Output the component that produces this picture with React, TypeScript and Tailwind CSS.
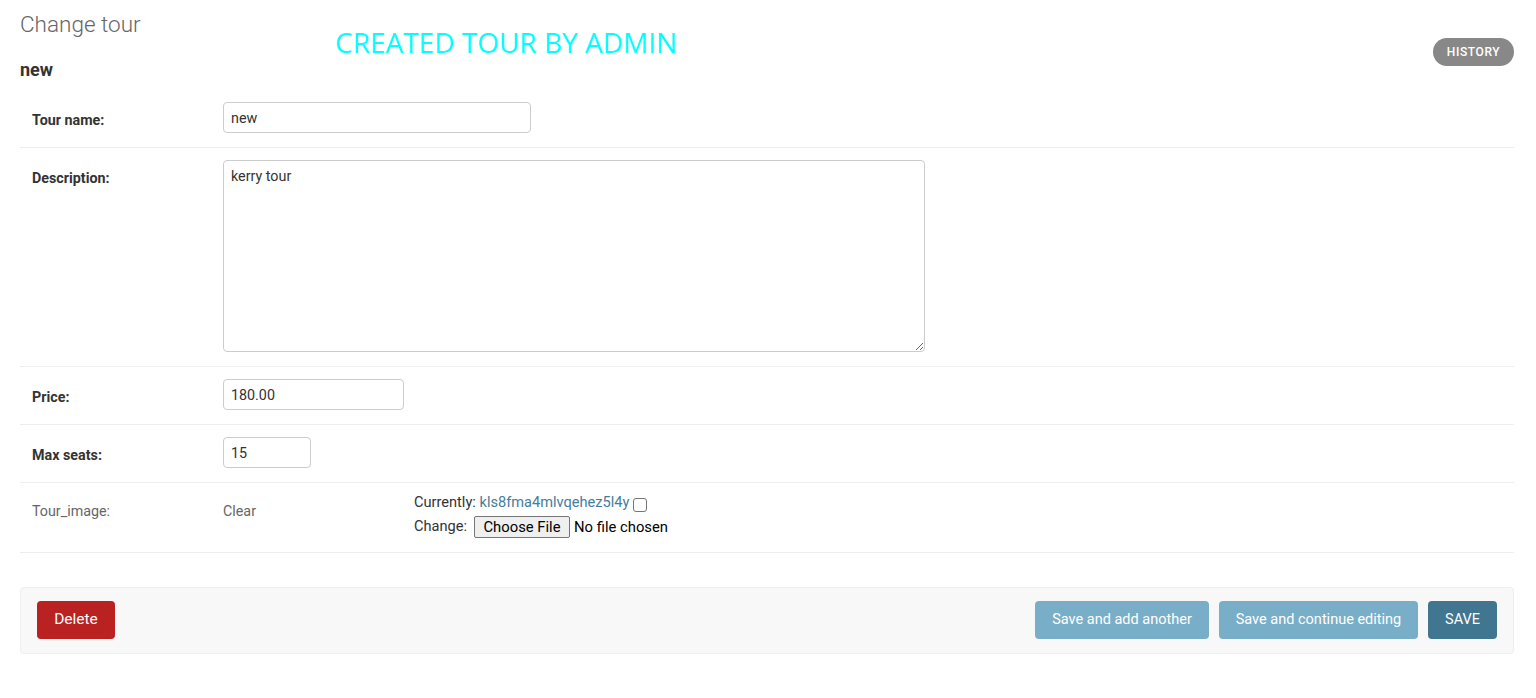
import React from "react";

const roboto = { fontFamily: "Roboto, 'Liberation Sans', sans-serif" };

function Row({ label, children }: { label: string; children: React.ReactNode }) {
  return (
    <div className="flex items-start border-b border-[#eee] pl-[12px] pt-[12px] pb-[14px]">
      <label className="w-[191px] shrink-0 pt-[8px] text-[14.3px] font-bold leading-[20px] text-[#333]">{label}</label>
      {children}
    </div>
  );
}

export default function App() {
  return (
    <div className="min-h-[698px] bg-white pl-[20px] pt-[10px] pr-[22px] text-[#333]" style={roboto}>
      <div className="flex items-start">
        <div className="flex w-[121px] shrink-0 flex-col whitespace-nowrap">
          <h1 className="text-[22.5px] font-light leading-[28px] text-[#666]">Change tour</h1>
          <h2 className="mt-[20px] text-[18px] font-bold leading-[24px] text-[#333]">new</h2>
        </div>
        <div
          className="ml-[194px] mt-[16px] text-[28px] leading-[32px] text-[#00ffff]"
          style={{ fontFamily: "'Open Sans', 'Noto Sans', sans-serif" }}
        >
          CREATED TOUR BY ADMIN
        </div>
        <a className="ml-auto mt-[28px] flex h-[28px] w-[81px] items-center justify-center rounded-[15px] bg-[#888] text-[12px] font-medium uppercase tracking-[0.6px] text-white">
          History
        </a>
      </div>

      <div className="mt-[8px]">
        <Row label="Tour name:">
          <input
            defaultValue="new"
            className="h-[31px] w-[308px] rounded-[4px] border border-[#ccc] px-[7px] text-[14.3px] text-[#333] outline-none"
          />
        </Row>
        <Row label="Description:">
          <textarea
            defaultValue="kerry tour"
            className="block h-[192px] w-[702px] rounded-[4px] border border-[#ccc] px-[7px] py-[5px] text-[14.3px] leading-[20px] text-[#333] outline-none"
          />
        </Row>
        <Row label="Price:">
          <input
            defaultValue="180.00"
            className="h-[31px] w-[181px] rounded-[4px] border border-[#ccc] px-[7px] text-[14.3px] text-[#333] outline-none"
          />
        </Row>
        <Row label="Max seats:">
          <input
            defaultValue="15"
            className="h-[31px] w-[88px] rounded-[4px] border border-[#ccc] px-[7px] text-[14.3px] text-[#333] outline-none"
          />
        </Row>
        <div className="flex items-start border-b border-[#eee] pl-[12px] pt-[10px] pb-[13px] text-[14.3px] text-[#666]">
          <span className="w-[191px] shrink-0 pt-[8px] leading-[20px]">Tour_image:</span>
          <span className="w-[191px] shrink-0 pt-[8px] leading-[20px]">Clear</span>
          <div className="flex flex-col text-[14.6px] text-[#333]">
            <div className="flex h-[20px] items-center">
              <span>Currently:&nbsp;</span>
              <a className="text-[#447e9b]">kls8fma4mlvqehez5l4y</a>
              <span className="ml-[4px] mt-[3px] inline-block h-[14px] w-[14px] rounded-[3px] border border-[#767676] bg-white" />
            </div>
            <div className="mt-[2px] flex h-[24px] items-center">
              <span>Change:</span>
              <span className="ml-[7px] flex h-[22px] w-[96px] items-center justify-center rounded-[2px] border border-[#767676] bg-[#efefef] text-[14.8px] text-[#000]">Choose File</span>
              <span className="ml-[4px] text-[14.8px] text-[#000]">No file chosen</span>
            </div>
          </div>
        </div>
      </div>

      <div className="mt-[34px] flex items-center rounded-[4px] border border-[#eee] bg-[#f8f8f8] px-[16px] pt-[13px] pb-[14px]">
        <button className="flex h-[38px] w-[78px] items-center justify-center rounded-[4px] bg-[#ba2121] text-[15.5px] text-white">Delete</button>
        <div className="ml-auto flex gap-[10px]">
          <button className="flex h-[38px] w-[174px] items-center justify-center rounded-[4px] bg-[#79aec8] text-[14.5px] text-white">Save and add another</button>
          <button className="flex h-[38px] w-[199px] items-center justify-center rounded-[4px] bg-[#79aec8] text-[14.5px] text-white">Save and continue editing</button>
          <button className="flex h-[38px] w-[69px] items-center justify-center rounded-[4px] bg-[#417690] text-[14.5px] text-white">SAVE</button>
        </div>
      </div>
    </div>
  );
}
